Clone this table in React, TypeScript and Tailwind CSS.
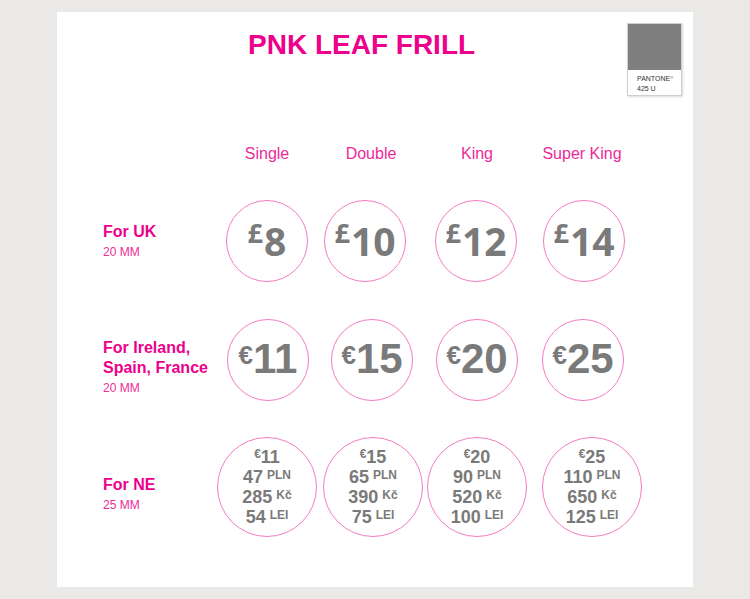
import React from 'react';

const PINK = 'text-[#ec008c]';

type Simple = { sym: string; num: string; ml: string };
type Multi = { eur: string; pln: string; kc: string; lei: string; ml: string };

const rowUK: Simple[] = [
  { sym: '£', num: '8', ml: 'ml-[10px]' },
  { sym: '£', num: '10', ml: 'ml-[6px]' },
  { sym: '£', num: '12', ml: 'ml-[11px]' },
  { sym: '£', num: '14', ml: 'ml-[13px]' },
];

const rowEU: Simple[] = [
  { sym: '€', num: '11', ml: 'ml-[11px]' },
  { sym: '€', num: '15', ml: 'ml-[13px]' },
  { sym: '€', num: '20', ml: 'ml-[12px]' },
  { sym: '€', num: '25', ml: 'ml-[12px]' },
];

const rowNE: Multi[] = [
  { eur: '11', pln: '47', kc: '285', lei: '54', ml: 'ml-[1px]' },
  { eur: '15', pln: '65', kc: '390', lei: '75', ml: 'ml-[5px]' },
  { eur: '20', pln: '90', kc: '520', lei: '100', ml: 'ml-[3px]' },
  { eur: '25', pln: '110', kc: '650', lei: '125', ml: 'ml-[12px]' },
];

const grid = 'grid grid-cols-[113px_102px_106px_106px_110px] items-center';

const Label = ({ lines, size, shift }: { lines: string[]; size: string; shift?: string }) => (
  <div className={`flex flex-col ${shift ?? ''}`}>
    {lines.map((l) => (
      <span key={l} className={`text-[16px] leading-[20px] font-bold ${PINK}`}>{l}</span>
    ))}
    <span className="text-[12px] leading-[16px] mt-[2px] text-[#ee2a98]">{size}</span>
  </div>
);

const Circle = ({ d, ml, children }: { d: string; ml: string; children: React.ReactNode }) => (
  <div className={`${d} ${ml} rounded-full border-[1.5px] border-[#f37cc2] flex items-center justify-center`}>
    {children}
  </div>
);

const Line = ({ num, cur }: { num: string; cur: string }) => (
  <div className="flex items-start justify-center leading-[20px] h-[20px]">
    <span className="text-[18px] font-bold">{num}</span>
    <span className="text-[12px] font-bold leading-[12px] ml-[4px] mt-[2px]">{cur}</span>
  </div>
);

export default function App() {
  return (
    <div className="w-[750px] h-[599px] bg-[#ebe9e7] pt-[12px] pl-[57px] font-['Liberation_Sans',Arial,sans-serif]">
      <div className="w-[636px] h-[575px] bg-white flex flex-col pl-[46px]">
        {/* header */}
        <div className="flex items-start pt-[11px]">
          <h1 className={`ml-[145px] mt-[8px] text-[28px] leading-[28px] font-bold ${PINK}`}>PNK LEAF FRILL</h1>
          <div className="ml-auto mr-[11px] w-[55px] h-[73px] border border-[#cfcfcf] shadow-[1px_1px_2px_rgba(0,0,0,0.15)] flex flex-col">
            <div className="h-[46px] bg-[#7f7f7f]" />
            <div className="pl-[9px] pt-[4px] text-[7px] leading-[10px] text-[#333]">
              <div>PANTONE<sup className="text-[4px]">®</sup></div>
              <div>425 U</div>
            </div>
          </div>
        </div>

        {/* column headers */}
        <div className={`${grid} mt-[48px]`}>
          <div />
          {['Single', 'Double', 'King', 'Super King'].map((h, i) => (
            <div key={h} className={`flex justify-center text-[16px] leading-[20px] text-[#ee2a98] ${i === 3 ? 'mr-[6px]' : ''}`}>
              {h}
            </div>
          ))}
        </div>

        {/* UK */}
        <div className={`${grid} mt-[36px]`}>
          <Label lines={['For UK']} size="20 MM" />
          {rowUK.map((p) => (
            <Circle key={p.num} d="w-[82px] h-[82px]" ml={p.ml}>
              <div className="flex items-start leading-none font-bold text-[#7a7a7a] font-['Open_Sans',sans-serif] mt-[-1px]">
                <span className="text-[27px] mt-[-2px] mr-[1px]">{p.sym}</span>
                <span className="text-[39px]">{p.num}</span>
              </div>
            </Circle>
          ))}
        </div>

        {/* Ireland, Spain, France */}
        <div className={`${grid} mt-[37px]`}>
          <Label lines={['For Ireland,', 'Spain, France']} size="20 MM" shift="mt-[14px]" />
          {rowEU.map((p) => (
            <Circle key={p.num} d="w-[82px] h-[82px]" ml={p.ml}>
              <div className="flex items-start leading-none font-bold text-[#7a7a7a] mt-[-2px]">
                <span className="text-[26px] mt-[4px]">{p.sym}</span>
                <span className="text-[42px]">{p.num}</span>
              </div>
            </Circle>
          ))}
        </div>

        {/* NE */}
        <div className={`${grid} mt-[36px]`}>
          <Label lines={['For NE']} size="25 MM" shift="mt-[14px]" />
          {rowNE.map((p) => (
            <Circle key={p.eur} d="w-[100px] h-[100px]" ml={p.ml}>
              <div className="flex flex-col text-[#7a7a7a]">
                <div className="flex items-start justify-center leading-[20px] h-[20px]">
                  <span className="text-[12px] font-bold leading-[12px] mt-[1px]">€</span>
                  <span className="text-[18px] font-bold">{p.eur}</span>
                </div>
                <Line num={p.pln} cur="PLN" />
                <Line num={p.kc} cur="Kč" />
                <Line num={p.lei} cur="LEI" />
              </div>
            </Circle>
          ))}
        </div>
      </div>
    </div>
  );
}
